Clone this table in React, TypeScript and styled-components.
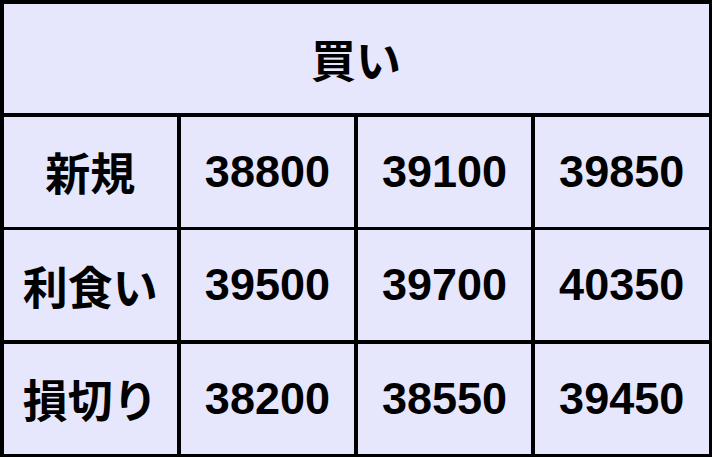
import { Fragment } from "react";
import styled, { createGlobalStyle } from "styled-components";

const GlobalStyle = createGlobalStyle`
    html, body {
        margin: 0;
        padding: 0;
        background: #ffffff;
    }
`;

const rows = [
    { label: "新規", values: [38800, 39100, 39850] },
    { label: "利食い", values: [39500, 39700, 40350] },
    { label: "損切り", values: [38200, 38550, 39450] },
];

const TableSc = styled.div`
    display: grid;
    grid-template-columns: repeat(4, 1fr);
    grid-template-rows: repeat(4, 1fr);
    gap: 3.5px;
    padding: 3.5px;
    width: 712px;
    height: 457px;
    box-sizing: border-box;
    background: #000000;
    font-family: "Liberation Sans", "Noto Sans CJK JP", sans-serif;
    font-weight: bold;
    color: #000000;
`;

const CellSc = styled.div<{ $span?: number }>`
    grid-column: span ${props => props.$span || 1};
    display: flex;
    align-items: center;
    justify-content: center;
    background: #e6e6fc;
    font-size: 45px;
    white-space: nowrap;
`;

const App = () => {
    return (
        <>
            <GlobalStyle />
            <TableSc>
                <CellSc $span={4}>買い</CellSc>
                {rows.map(row => (
                    <Fragment key={row.label}>
                        <CellSc>{row.label}</CellSc>
                        {row.values.map(v => (
                            <CellSc key={v}>{v}</CellSc>
                        ))}
                    </Fragment>
                ))}
            </TableSc>
        </>
    );
};

export default App;
